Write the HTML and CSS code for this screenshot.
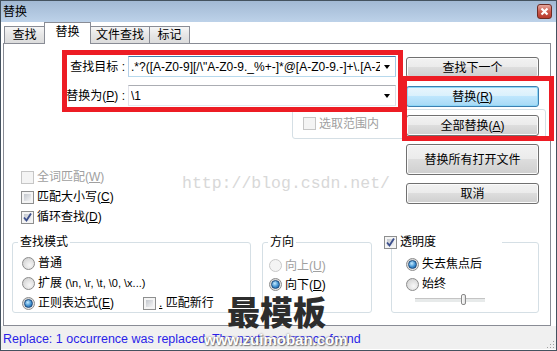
FILE: index.html
```html
<!DOCTYPE html>
<html lang="zh-CN">
<head>
    <meta charset="UTF-8">
    <title>替换</title>
    <link rel="stylesheet" href="styles.css">
</head>
<body>
    <div class="window">
        <div class="titlebar">
            <span class="title">替换</span>
            <span class="close">
                <svg width="9" height="9" viewBox="0 0 9 9"><path d="M1.5 1.5 L7.5 7.5 M7.5 1.5 L1.5 7.5" stroke="#fff" stroke-width="2.2" /></svg>
            </span>
        </div>

        <div class="tabs">
            <div class="tab">查找</div>
            <div class="tab active">替换</div>
            <div class="tab">文件查找</div>
            <div class="tab">标记</div>
        </div>

        <div class="page">
            <div class="main">
                <div class="left">
                    <div class="form">
                        <label>查找目标 :</label>
                        <div class="combo focus">
                            <span class="value">.*?([A-Z0-9][/\"A-Z0-9._%+-]*@[A-Z0-9.-]+\.[A-Z]{2,4})</span>
                            <span class="arrow"></span>
                        </div>
                        <label>替换为(<u>P</u>) :</label>
                        <div class="combo">
                            <span class="value">\1</span>
                            <span class="arrow"></span>
                        </div>
                    </div>

                    <div class="selection">
                        <div class="check disabled"><span class="cb"></span><span>选取范围内</span></div>
                    </div>

                    <div class="options">
                        <div class="check disabled"><span class="cb"></span><span>全词匹配(<u>W</u>)</span></div>
                        <div class="check"><span class="cb"></span><span>匹配大小写(<u>C</u>)</span></div>
                        <div class="check"><span class="cb checked"><svg width="11" height="11" viewBox="0 0 11 11"><path d="M2 5.5 L4.5 8.5 L9 1.5" fill="none" stroke="#3c4f8c" stroke-width="1.9" /></svg></span><span>循环查找(<u>D</u>)</span></div>
                    </div>
                </div>

                <div class="buttons">
                    <button>查找下一个</button>
                    <button class="default">替换(<u>R</u>)</button>
                    <button>全部替换(<u>A</u>)</button>
                    <button class="tall">替换所有打开文件</button>
                    <button>取消</button>
                </div>
            </div>

            <div class="groups">
                <fieldset class="group mode">
                    <legend>查找模式</legend>
                    <div class="radio"><span class="rb"></span><span>普通</span></div>
                    <div class="radio"><span class="rb"></span><span>扩展 <span class="latin">(\n, \r, \t, \0, \x...)</span></span></div>
                    <div class="row">
                        <div class="radio regex"><span class="rb on"></span><span>正则表达式(<u>E</u>)</span></div>
                        <div class="check"><span class="cb"></span><span><u>.</u>&nbsp;匹配新行</span></div>
                    </div>
                </fieldset>

                <fieldset class="group direction">
                    <legend>方向</legend>
                    <div class="radio disabled"><span class="rb"></span><span>向上(<u>U</u>)</span></div>
                    <div class="radio"><span class="rb on"></span><span>向下(<u>D</u>)</span></div>
                </fieldset>

                <fieldset class="group opacity">
                    <legend><span class="check"><span class="cb checked"><svg width="11" height="11" viewBox="0 0 11 11"><path d="M2 5.5 L4.5 8.5 L9 1.5" fill="none" stroke="#3c4f8c" stroke-width="1.9" /></svg></span><span>透明度</span></span></legend>
                    <div class="radio"><span class="rb on"></span><span>失去焦点后</span></div>
                    <div class="radio"><span class="rb"></span><span>始终</span></div>
                    <div class="slider"><span class="thumb"></span></div>
                </fieldset>
            </div>
        </div>

        <div class="status">
            Replace: 1 occurrence was replaced. The next occurrence found
            <svg class="grip" width="9" height="9" viewBox="0 0 9 9">
                <rect x="7" y="1" width="1" height="1" fill="#a0a0a0" />
                <rect x="4" y="4" width="1" height="1" fill="#a0a0a0" />
                <rect x="7" y="4" width="1" height="1" fill="#a0a0a0" />
                <rect x="1" y="7" width="1" height="1" fill="#a0a0a0" />
                <rect x="4" y="7" width="1" height="1" fill="#a0a0a0" />
                <rect x="7" y="7" width="1" height="1" fill="#a0a0a0" />
            </svg>
        </div>

        <!-- annotations and watermarks drawn over the dialog -->
        <div class="mark mark-fields"></div>
        <div class="mark mark-buttons"></div>
        <div class="wm-blog">http://blog.csdn.net/</div>
        <div class="wm-logo">最模板</div>
        <div class="wm-site">www.zuimoban.com</div>
    </div>
</body>
</html>
```

FILE: styles.css
```css
* {
    box-sizing: border-box;
}

body {
    margin: 0;
    font-family: "Liberation Sans", "Noto Sans CJK SC", sans-serif;
    font-size: 12px;
    color: #000;
    background: #fff;
}

.window {
    position: relative;
    width: 557px;
    height: 351px;
    border: 1px solid #44525f;
    background: #fff;
    display: flex;
    flex-direction: column;
    overflow: hidden;
}

/* title bar */
.titlebar {
    flex: none;
    height: 21px;
    display: flex;
    align-items: center;
    justify-content: space-between;
    padding: 0 4px 0 2px;
    background: linear-gradient(#a2b9d4, #bdd2e9);
}

.title {
    line-height: 14px;
}

.close {
    width: 15px;
    height: 15px;
    border: 1px solid #6e2b24;
    border-radius: 3px;
    background: linear-gradient(#e5a79e, #cb5b4e 50%, #b7392c);
    display: flex;
    align-items: center;
    justify-content: center;
}

/* tabs */
.tabs {
    flex: none;
    height: 21px;
    display: flex;
    align-items: flex-end;
    padding-left: 4px;
    position: relative;
    z-index: 1;
}

.tab {
    height: 17px;
    min-width: 41px;
    padding: 0 5px;
    margin-left: -1px;
    border: 1px solid #898c95;
    border-bottom: none;
    background: linear-gradient(#f6f6f6, #e6e6e6 50%, #dcdcdc);
    display: flex;
    align-items: center;
    justify-content: center;
    line-height: 14px;
}

.tab.active {
    height: 22px;
    min-width: 47px;
    margin-bottom: -1px;
    padding-bottom: 4px;
    background: #fff;
}

/* tab page */
.page {
    flex: none;
    width: 548px;
    height: 283px;
    margin-left: 2px;
    border: 1px solid #898c95;
    background: #fff;
}

.main {
    display: grid;
    grid-template-columns: 402px 133px;
    padding-right: 11px;
}

.left {
    padding-top: 12px;
}

.form {
    display: grid;
    grid-template-columns: 124px 268px;
    grid-auto-rows: 21px;
    row-gap: 8px;
    align-items: center;
}

.form label {
    text-align: right;
    padding-right: 3px;
    white-space: nowrap;
    line-height: 14px;
}

.combo {
    height: 21px;
    border: 1px solid #abadb3;
    border-color: #abadb3 #dbdfe6 #e3e9ef #e2e3ea;
    display: flex;
    align-items: center;
    padding-left: 2px;
    background: #fff;
}

.combo.focus {
    border-color: #3d7bad #a4c9e3 #b7d9ed #b5cfe7;
}

.value {
    flex: 1;
    overflow: hidden;
    white-space: nowrap;
    font-size: 12px;
}

.arrow {
    flex: none;
    width: 0;
    height: 0;
    margin: 0 5px 0 4px;
    border-left: 3.5px solid transparent;
    border-right: 3.5px solid transparent;
    border-top: 4px solid #000;
}

.selection {
    margin-top: 3px;
    margin-left: 288px;
    width: 254px;
    height: 30px;
    border: 1px solid #d5dfe5;
    border-radius: 3px;
    padding: 7px 0 0 10px;
}

.selection .check {
    height: 13px;
}

.options {
    margin-top: 28px;
    padding-left: 17px;
}

/* checkboxes and radios */
.check,
.radio {
    display: flex;
    align-items: center;
    gap: 3px;
    height: 20px;
    line-height: 14px;
    white-space: nowrap;
}

.disabled {
    color: #a0a0a0;
}

.cb {
    flex: none;
    width: 13px;
    height: 13px;
    border: 1px solid #8e8f8f;
    background: #f4f4f4;
    position: relative;
    display: flex;
    align-items: center;
    justify-content: center;
}

.cb::before {
    content: "";
    position: absolute;
    inset: 2px;
    background: linear-gradient(135deg, #c3c7cd, #f4f4f5);
}

.cb svg {
    position: relative;
}

.disabled .cb {
    border-color: #c6c6c6;
}

.disabled .cb::before {
    background: #f4f4f4;
}

.rb {
    flex: none;
    width: 13px;
    height: 13px;
    border-radius: 50%;
    border: 1px solid #8c8c8c;
    background: radial-gradient(circle at 60% 65%, #f8f8f8, #d8d8d8 70%, #c4c4c4);
    display: flex;
    align-items: center;
    justify-content: center;
}

.rb.on::after {
    content: "";
    width: 7px;
    height: 7px;
    border-radius: 50%;
    border: 1px solid #1d4a7c;
    background: radial-gradient(circle at 40% 35%, #c6ebff, #3d8fd0 55%, #1c5592);
}

.disabled .rb {
    border-color: #c8c8c8;
    background: #f4f4f4;
}

/* buttons */
.buttons {
    display: flex;
    flex-direction: column;
    gap: 8px;
    padding-top: 13px;
}

button {
    height: 21px;
    width: 133px;
    padding: 0;
    font: inherit;
    line-height: 14px;
    color: #000;
    border: 1px solid #707070;
    border-radius: 3px;
    background: linear-gradient(#f2f2f2, #ebebeb 49%, #dddddd 50%, #cfcfcf);
    box-shadow: inset 0 0 0 1px #fbfbfb;
}

button.default {
    border-color: #3c7fb1;
    background: linear-gradient(#eaf6fd, #d9f0fc 49%, #bee6fd 50%, #a7d9f5);
    box-shadow: inset 0 0 0 1px #8fd7f7;
}

button.tall {
    height: 31px;
}

/* bottom groups */
.groups {
    display: flex;
    margin-top: 8px;
}

.group {
    margin: 0;
    height: 78px;
    min-width: 0;
    border: 1px solid #d5dfe5;
    border-radius: 3px;
}

.group legend {
    line-height: 14px;
    padding: 0 2px;
}

.mode {
    margin-left: 8px;
    width: 239px;
    padding: 4px 0 0 9px;
}

.mode legend {
    margin-left: -4px;
}

.latin {
    font-size: 11px;
}

.row {
    display: flex;
}

.radio.regex {
    width: 121px;
}

.direction {
    margin-left: 11px;
    width: 110px;
    padding: 7px 0 0 6px;
}

.direction legend {
    margin-left: -1px;
}

.direction .radio {
    height: 19px;
}

.opacity {
    margin-left: 19px;
    width: 148px;
    padding: 5px 0 0 14px;
}

.opacity legend {
    margin-left: -22px;
    width: 118px;
    padding: 0;
}

.opacity legend .check {
    height: 14px;
}

.slider {
    position: relative;
    margin-left: 9px;
    width: 70px;
    height: 11px;
}

.slider::before {
    content: "";
    position: absolute;
    left: 0;
    right: 0;
    top: 4px;
    height: 3px;
    border-top: 1px solid #c4c4c4;
    border-bottom: 1px solid #fff;
    background: #e7eaea;
}

.thumb {
    position: absolute;
    left: 46px;
    top: 0;
    width: 5px;
    height: 11px;
    border: 1px solid #8a8a8a;
    border-radius: 2px;
    background: linear-gradient(90deg, #fdfdfd, #e0e0e0);
}

/* status bar */
.status {
    flex: none;
    position: relative;
    height: 23px;
    padding: 2px 0 0 2px;
    display: flex;
    align-items: center;
    background: #f0f0f0;
    color: #2a1ee8;
    font-size: 12.5px;
    white-space: nowrap;
}

.grip {
    position: absolute;
    right: 1px;
    bottom: 0;
}

/* red annotation boxes */
.mark {
    position: absolute;
    border: 5px solid #ed1c24;
}

.mark-fields {
    left: 61px;
    top: 49px;
    width: 341px;
    height: 62px;
}

.mark-buttons {
    left: 401px;
    top: 75px;
    width: 152px;
    height: 65px;
}

/* watermarks */
.wm-blog {
    position: absolute;
    left: 181px;
    top: 174px;
    font-family: "Liberation Mono", monospace;
    font-size: 16.5px;
    line-height: 18px;
    color: #d8d8d8;
}

.wm-logo {
    position: absolute;
    left: 226px;
    top: 294px;
    font-family: "Noto Sans CJK SC", sans-serif;
    font-weight: 900;
    font-size: 33px;
    line-height: 33px;
    color: #2d2d2d;
}

.wm-site {
    position: absolute;
    left: 203px;
    top: 330px;
    font-family: "Liberation Sans", sans-serif;
    font-weight: bold;
    font-size: 15px;
    line-height: 17px;
    color: #fff;
    text-shadow: 0 0 2px #666, 1px 1px 1px #888;
}
```
